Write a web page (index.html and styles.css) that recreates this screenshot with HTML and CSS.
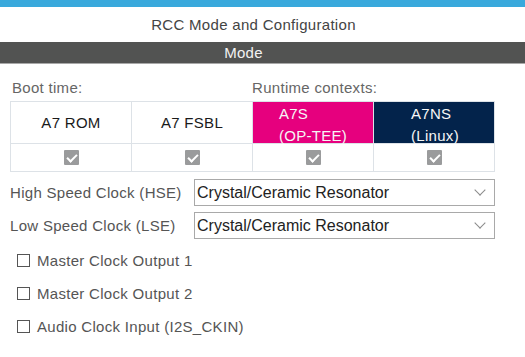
FILE: index.html
```html
<!DOCTYPE html>
<html lang="en">
<head>
	<meta charset="UTF-8">
	<title>RCC Mode and Configuration</title>
	<link rel="stylesheet" href="styles.css">
</head>
<body>
	<div class="topbar"></div>
	<div class="title">RCC Mode and Configuration</div>
	<div class="section-head">Mode</div>

	<div class="mode">
		<div class="ctx-labels">
			<span class="boot">Boot time:</span>
			<span class="runtime">Runtime contexts:</span>
		</div>
		<div class="ctx">
			<div class="cell head">A7 ROM</div>
			<div class="cell head">A7 FSBL</div>
			<div class="cell head secure"><span class="two">A7S<br>(OP-TEE)</span></div>
			<div class="cell head nonsecure"><span class="two">A7NS<br>(Linux)</span></div>
			<div class="cell tick"><span class="on"></span></div>
			<div class="cell tick"><span class="on"></span></div>
			<div class="cell tick"><span class="on"></span></div>
			<div class="cell tick"><span class="on"></span></div>
		</div>

		<div class="field">
			<span class="label">High Speed Clock (HSE)</span>
			<div class="select">Crystal/Ceramic Resonator<i class="chev"></i></div>
		</div>
		<div class="field">
			<span class="label">Low Speed Clock (LSE)</span>
			<div class="select">Crystal/Ceramic Resonator<i class="chev"></i></div>
		</div>

		<div class="checks">
			<div class="check"><span class="box"></span>Master Clock Output 1</div>
			<div class="check"><span class="box"></span>Master Clock Output 2</div>
			<div class="check"><span class="box"></span>Audio Clock Input (I2S_CKIN)</div>
		</div>
	</div>
</body>
</html>
```

FILE: styles.css
```css
* { margin: 0; padding: 0; box-sizing: border-box; }
body { font-family: "Liberation Sans", Arial, sans-serif; font-size: 15px; color: #555; background: #fff; letter-spacing: 0.3px; }

.topbar { height: 7px; background: #39a9dc; }
.title { height: 35px; line-height: 35px; text-align: center; color: #444; padding-right: 18px; }
.section-head { height: 22px; line-height: 21px; background: #525352; color: #f2f2f2; text-align: center; border-bottom: 1px solid #a8a8a8; padding-right: 38px; }

.mode { padding: 16px 0 0 10px; width: 495px; }

.ctx-labels { display: grid; grid-template-columns: 242px 242px; height: 21px; line-height: 16px; color: #666; }
.ctx-labels .boot { padding-left: 2px; }

.ctx { display: grid; grid-template-columns: repeat(4, 121px); grid-template-rows: 42px 28px; border-top: 1px solid #dde2e7; border-left: 1px solid #dde2e7; width: 485px; }
.cell { border-right: 1px solid #dde2e7; border-bottom: 1px solid #dde2e7; display: flex; align-items: center; justify-content: center; }
.cell.head { color: #1a1a1a; font-size: 15px; }
.cell.secure { background: #e6007e; color: #f6f6f6; align-items: flex-start; }
.cell.nonsecure { background: #03234b; color: #f6f6f6; align-items: flex-start; }
.two { display: inline-block; text-align: left; line-height: 22px; margin-top: 1px; }
.nonsecure .two { margin-left: 2px; }

.tick .on { width: 15px; height: 15px; background: #9a9b9c; border-radius: 1px; position: relative; }
.tick .on::after { content: ""; position: absolute; left: 5px; top: 2px; width: 4px; height: 8px; border-right: 2px solid #fff; border-bottom: 2px solid #fff; transform: rotate(45deg); }

.field { display: flex; align-items: center; margin-top: 7px; }
.field + .field { margin-top: 6px; }
.field .label { width: 184px; }
.select { width: 301px; height: 27px; border: 1px solid #a9a9a9; display: flex; align-items: center; justify-content: space-between; padding: 0 10px 0 2px; color: #222; font-size: 16px; letter-spacing: 0; }
.chev { width: 8px; height: 8px; border-right: 1px solid #8a8a8a; border-bottom: 1px solid #8a8a8a; transform: rotate(45deg); margin-top: -5px; }

.checks { padding-top: 5px; }
.check { display: flex; align-items: center; height: 33px; padding-left: 7px; }
.box { width: 13px; height: 13px; border: 1px solid #555; margin-right: 7px; background: #fff; }
```
